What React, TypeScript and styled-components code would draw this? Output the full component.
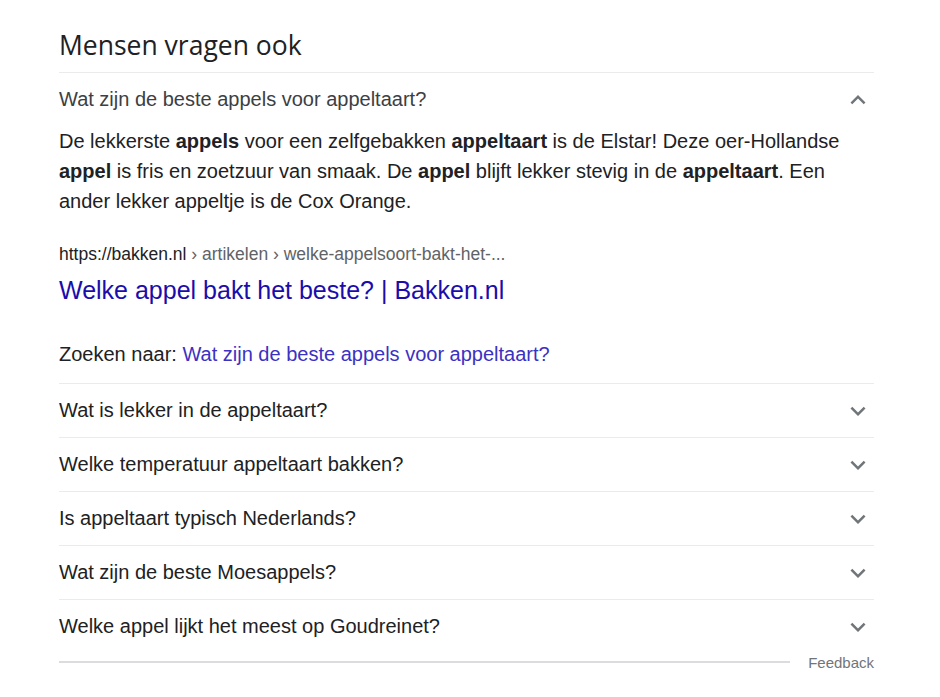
import styled, { createGlobalStyle } from "styled-components";

const GlobalStyle = createGlobalStyle`
  body {
    margin: 0;
    background: #fff;
    font-family: "Liberation Sans", Arial, sans-serif;
  }
`;

const Wrapper = styled.div`
  width: 815px;
  padding-left: 59px;
`;

const Heading = styled.h2`
  margin: 0;
  padding-top: 29px;
  padding-bottom: 11px;
  font-family: "Open Sans", Roboto, sans-serif;
  font-weight: 400;
  font-size: 26.5px;
  line-height: 32px;
  color: #202124;
`;

const Item = styled.div`
  border-top: 1px solid #ebebeb;
`;

const QuestionRow = styled.div`
  display: flex;
  align-items: center;
  justify-content: space-between;
  height: 53px;
  font-size: 20px;
`;

const QuestionText = styled.span<{ $open?: boolean }>`
  color: ${(p) => (p.$open ? "#3c4043" : "#202124")};
`;

const Chevron = styled.svg`
  width: 30px;
  height: 30px;
  margin-right: 1px;
  fill: #70757a;
`;

const Answer = styled.div`
  padding-bottom: 14px;
`;

const Snippet = styled.p`
  margin: 0;
  font-size: 20px;
  line-height: 30px;
  color: #202124;

  b {
    font-weight: 700;
  }
`;

const Source = styled.div`
  margin-top: 27px;
  display: flex;
  flex-direction: column;
`;

const Url = styled.div`
  font-size: 17.5px;
  line-height: 22px;
  color: #5f6368;

  span {
    color: #202124;
  }
`;

const Title = styled.a`
  margin-top: 10px;
  font-size: 25px;
  line-height: 30px;
  color: #1a0dab;
  text-decoration: none;
`;

const SearchFor = styled.div`
  margin-top: 34px;
  font-size: 20px;
  line-height: 30px;
  color: #202124;

  a {
    color: #3b31c3;
    text-decoration: none;
  }
`;

const Footer = styled.div`
  display: flex;
  align-items: center;
  gap: 18px;
  height: 18px;
`;

const FooterLine = styled.div`
  flex: 1;
  height: 2px;
  background: #dadce0;
`;

const Feedback = styled.span`
  font-size: 15px;
  color: #70757a;
`;

const ChevronIcon = ({ up }: { up?: boolean }) => (
  <Chevron viewBox="0 0 24 24">
    {up ? (
      <path d="M7.41 15.41L12 10.83l4.59 4.58L18 14l-6-6-6 6z" />
    ) : (
      <path d="M16.59 8.59L12 13.17 7.41 8.59 6 10l6 6 6-6z" />
    )}
  </Chevron>
);

const questions = [
  "Wat is lekker in de appeltaart?",
  "Welke temperatuur appeltaart bakken?",
  "Is appeltaart typisch Nederlands?",
  "Wat zijn de beste Moesappels?",
  "Welke appel lijkt het meest op Goudreinet?",
];

const App = () => {
  return (
    <>
      <GlobalStyle />
      <Wrapper>
        <Heading>Mensen vragen ook</Heading>

        <Item>
          <QuestionRow>
            <QuestionText $open>Wat zijn de beste appels voor appeltaart?</QuestionText>
            <ChevronIcon up />
          </QuestionRow>
          <Answer>
            <Snippet>
              De lekkerste <b>appels</b> voor een zelfgebakken <b>appeltaart</b> is de Elstar! Deze oer-Hollandse{" "}
              <b>appel</b> is fris en zoetzuur van smaak. De <b>appel</b> blijft lekker stevig in de <b>appeltaart</b>. Een
              ander lekker appeltje is de Cox Orange.
            </Snippet>
            <Source>
              <Url>
                <span>https://bakken.nl</span> › artikelen › welke-appelsoort-bakt-het-...
              </Url>
              <Title href="#">Welke appel bakt het beste? | Bakken.nl</Title>
            </Source>
            <SearchFor>
              Zoeken naar: <a href="#">Wat zijn de beste appels voor appeltaart?</a>
            </SearchFor>
          </Answer>
        </Item>

        {questions.map((q, index) => (
          <Item key={index}>
            <QuestionRow>
              <QuestionText>{q}</QuestionText>
              <ChevronIcon />
            </QuestionRow>
          </Item>
        ))}

        <Footer>
          <FooterLine />
          <Feedback>Feedback</Feedback>
        </Footer>
      </Wrapper>
    </>
  );
};

export default App;
